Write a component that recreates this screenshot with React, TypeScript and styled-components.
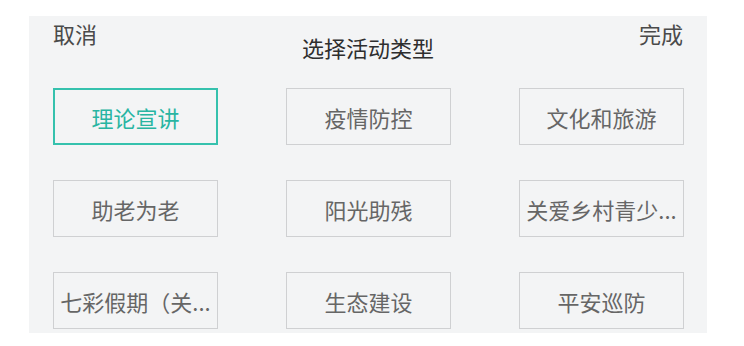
import React from "react";
import styled, { createGlobalStyle } from "styled-components";

const GlobalStyle = createGlobalStyle`
  html, body {
    margin: 0;
    padding: 0;
    background: #ffffff;
  }
  body {
    font-family: "Noto Sans CJK SC", "Noto Sans", sans-serif;
  }
`;

const Page = styled.div`
  width: 744px;
  height: 346px;
  box-sizing: border-box;
  padding: 16px 37px 13px 29px;
  background: #ffffff;
`;

const Panel = styled.div`
  height: 317px;
  box-sizing: border-box;
  padding: 0 24px 4px 24px;
  background: #f3f4f5;
  display: flex;
  flex-direction: column;
`;

const Header = styled.div`
  height: 72px;
  display: flex;
  justify-content: space-between;
  align-items: flex-start;
`;

const HeaderAction = styled.span`
  margin-top: 2px;
  font-size: 22px;
  line-height: 30px;
  color: #4a4a4a;
`;

const Title = styled.h1`
  margin: 16px 0 0 0;
  font-size: 22px;
  font-weight: 400;
  line-height: 30px;
  color: #2e2e2e;
`;

const Grid = styled.div`
  display: grid;
  grid-template-columns: repeat(3, 165px);
  grid-auto-rows: 57px;
  column-gap: 68px;
  row-gap: 35px;
`;

const TypeButton = styled.button<{ $active?: boolean }>`
  box-sizing: border-box;
  padding: 0;
  margin: 0;
  background: transparent;
  border: ${(p) => (p.$active ? "2px solid #35c1ad" : "1px solid #cfd0d2")};
  font-family: inherit;
  font-size: 22px;
  color: ${(p) => (p.$active ? "#28b5a2" : "#666666")};
  white-space: nowrap;
  overflow: hidden;
  cursor: pointer;
`;

const types = [
  "理论宣讲",
  "疫情防控",
  "文化和旅游",
  "助老为老",
  "阳光助残",
  "关爱乡村青少...",
  "七彩假期（关...",
  "生态建设",
  "平安巡防",
];

export default function App() {
  return (
    <Page>
      <GlobalStyle />
      <Panel>
        <Header>
          <HeaderAction>取消</HeaderAction>
          <Title>选择活动类型</Title>
          <HeaderAction>完成</HeaderAction>
        </Header>
        <Grid>
          {types.map((t, i) => (
            <TypeButton key={t} $active={i === 0}>
              {t}
            </TypeButton>
          ))}
        </Grid>
      </Panel>
    </Page>
  );
}
